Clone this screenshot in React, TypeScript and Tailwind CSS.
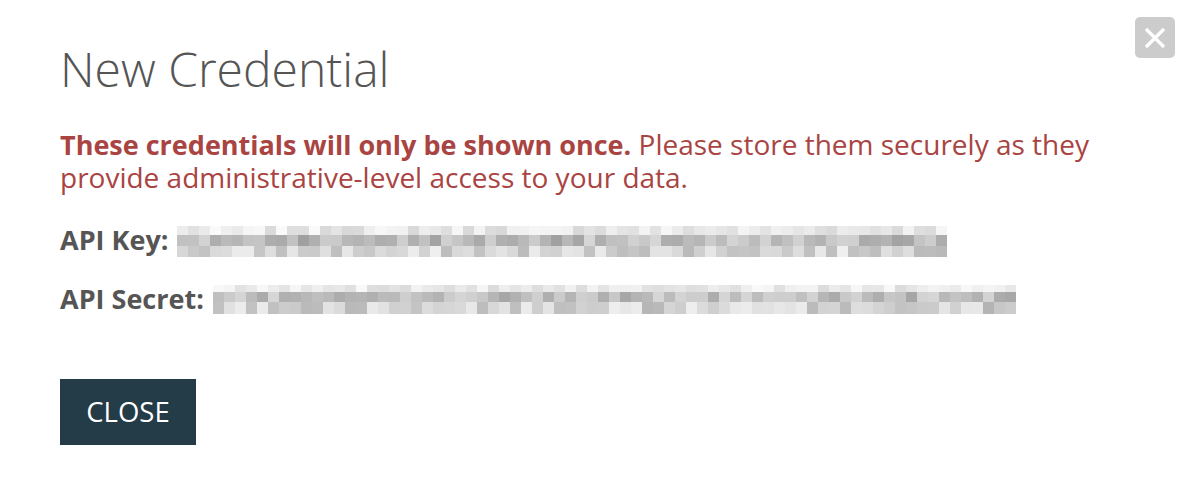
import React from "react";

function rng(seed: number) {
  let s = seed;
  return () => {
    s = (s * 1103515245 + 12345) & 0x7fffffff;
    return s / 0x7fffffff;
  };
}

function Mosaic({ blocks, seed, rows }: { blocks: number; seed: number; rows: { h: number; min: number; max: number }[] }) {
  const r = rng(seed);
  return (
    <div className="flex flex-col">
      {rows.map((row, i) => (
        <div key={i} className="flex" style={{ height: row.h }}>
          {Array.from({ length: blocks }).map((_, j) => {
            const v = Math.round(row.min + r() * (row.max - row.min));
            return <div key={j} className="w-[11px] shrink-0" style={{ background: `rgb(${v},${v},${v})` }} />;
          })}
        </div>
      ))}
    </div>
  );
}

export default function App() {
  return (
    <div className="relative w-[1192px] h-[492px] bg-white" style={{ fontFamily: '"Open Sans", sans-serif' }}>
      <button className="absolute left-[1135px] top-[17px] w-[40px] h-[41px] rounded-[5px] bg-[#cccccc] flex items-center justify-center">
        <svg width="24" height="24" viewBox="0 0 24 24">
          <path d="M3 3 L21 21 M21 3 L3 21" stroke="white" strokeWidth="3.2" strokeLinecap="butt" />
        </svg>
      </button>
      <div className="pl-[60px] pt-[43px]">
        <h1 className="text-[48px] leading-[1.1] font-light text-[#555555]">New Credential</h1>
        <p className="mt-[32px] text-[28px] leading-[33px] text-[#a94442]">
          <span className="font-bold text-[27px]">These credentials will only be shown once.</span> Please store them securely as they
          <br />
          provide administrative-level access to your data.
        </p>
        <div className="mt-[29px] flex items-start gap-[9px]">
          <span className="text-[27px] font-bold text-[#555555] leading-[33px]">API Key:</span>
          <div className="mt-[3px]">
            <Mosaic
              blocks={70}
              seed={7}
              rows={[
                { h: 9, min: 215, max: 250 },
                { h: 11, min: 160, max: 215 },
                { h: 11, min: 185, max: 240 },
              ]}
            />
          </div>
        </div>
        <div className="mt-[25px] flex items-start gap-[9px]">
          <span className="text-[27px] font-bold text-[#555555] leading-[33px]">API Secret:</span>
          <div className="mt-[3px]">
            <Mosaic
              blocks={73}
              seed={31}
              rows={[
                { h: 7, min: 220, max: 250 },
                { h: 10, min: 165, max: 215 },
                { h: 12, min: 180, max: 240 },
              ]}
            />
          </div>
        </div>
        <button className="mt-[64px] w-[136px] h-[66px] bg-[#243b48] text-white text-[27.5px] leading-none">CLOSE</button>
      </div>
    </div>
  );
}
